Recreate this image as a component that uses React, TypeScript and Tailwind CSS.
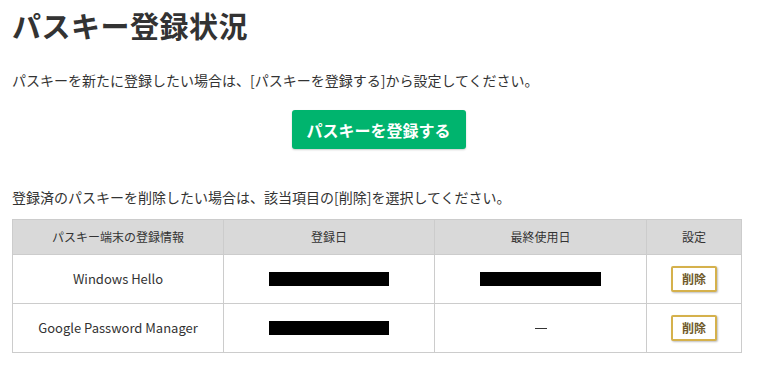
import React from 'react';

const font = { fontFamily: '"Noto Sans CJK JP", "Noto Sans", sans-serif' };

function Redacted({ w }: { w: string }) {
  return <span className={`inline-block h-[14px] bg-black ${w}`} />;
}

function DeleteButton() {
  return (
    <button
      type="button"
      className="h-[26px] w-[46px] rounded-[2px] border-2 border-[#d5b14c] bg-white text-[12px] font-bold leading-none text-[#6f5a2a] shadow-[1px_1px_2px_rgba(0,0,0,0.25)]"
    >
      削除
    </button>
  );
}

const rows = [
  { name: 'Windows Hello', registered: true, lastUsed: true },
  { name: 'Google Password Manager', registered: true, lastUsed: false },
];

export default function App() {
  return (
    <main className="min-h-screen bg-white px-3 pt-[4px] text-[#333]" style={font}>
      <h1 className="text-[29px] font-bold leading-[42px] tracking-[0.5px] text-[#333]">パスキー登録状況</h1>

      <p className="mt-[24px] text-[14px] leading-[20px]">
        パスキーを新たに登録したい場合は、[パスキーを登録する]から設定してください。
      </p>

      <div className="mt-[20px] flex justify-center">
        <button
          type="button"
          className="h-[39px] w-[174px] rounded-[3px] bg-[#00b46e] text-[16px] font-bold text-white shadow-[0_1px_2px_rgba(0,0,0,0.2)]"
        >
          パスキーを登録する
        </button>
      </div>

      <p className="mt-[38px] text-[14px] leading-[20px]">
        登録済のパスキーを削除したい場合は、該当項目の[削除]を選択してください。
      </p>

      <table className="mt-[12px] w-[730px] border-collapse text-center text-[13px] text-[#333]">
        <thead>
          <tr className="h-[35px] bg-[#d9d9d9] text-[12px]">
            <th className="w-[211px] border border-[#cccccc] font-normal">パスキー端末の登録情報</th>
            <th className="w-[211px] border border-[#cccccc] font-normal">登録日</th>
            <th className="w-[212px] border border-[#cccccc] font-normal">最終使用日</th>
            <th className="border border-[#cccccc] font-normal">設定</th>
          </tr>
        </thead>
        <tbody>
          {rows.map((row) => (
            <tr key={row.name} className="h-[49px]">
              <td className="border border-[#cccccc]">{row.name}</td>
              <td className="border border-[#cccccc]">
                <div className="flex justify-center">
                  <Redacted w="w-[120px]" />
                </div>
              </td>
              <td className="border border-[#cccccc]">
                {row.lastUsed ? (
                  <div className="flex justify-center">
                    <Redacted w="w-[121px]" />
                  </div>
                ) : (
                  <div className="flex justify-center">
                    <span className="inline-block h-[1px] w-[12px] bg-[#333]" />
                  </div>
                )}
              </td>
              <td className="border border-[#cccccc]">
                <div className="flex justify-center">
                  <DeleteButton />
                </div>
              </td>
            </tr>
          ))}
        </tbody>
      </table>
    </main>
  );
}
